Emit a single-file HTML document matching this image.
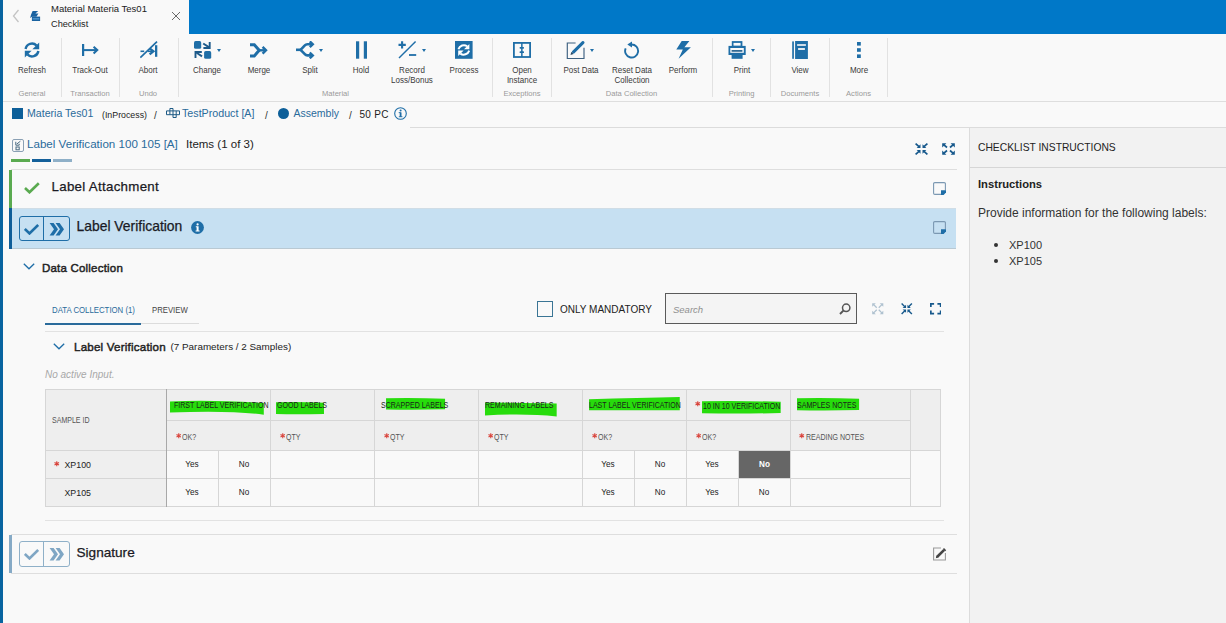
<!DOCTYPE html>
<html><head><meta charset="utf-8">
<style>
*{box-sizing:border-box;margin:0;padding:0}
html,body{width:1226px;height:623px;overflow:hidden}
body{background:#f9f9f9;font-family:"Liberation Sans",sans-serif;color:#222;position:relative}
.a{position:absolute}
.nw{white-space:nowrap}
.ic{position:absolute;fill:#1f6ea7;stroke:none}
.tl{position:absolute;font-size:8.6px;color:#3a3a3a;text-align:center;line-height:10px;white-space:nowrap;transform:scaleX(0.93);transform-origin:50% 0}
.gl{position:absolute;font-size:7.6px;color:#9a9a9a;text-align:center;white-space:nowrap;top:89px;line-height:9px}
.sep{position:absolute;top:38px;height:59px;width:1px;background:#e2e2e2}
.caret{position:absolute;width:0;height:0;border-left:2.5px solid transparent;border-right:2.5px solid transparent;border-top:3px solid #1f6ea7}
</style></head><body>
<!-- left bar -->
<div class="a" style="left:0;top:0;width:3px;height:623px;background:#0864a0"></div>
<!-- top blue bar -->
<div class="a" style="left:189px;top:0;width:1037px;height:34px;background:#0078c8"></div>

<!-- tab header -->
<svg class="a" style="left:12px;top:9px" width="8" height="14" viewBox="0 0 8 14"><path d="M6.5 1 L1.5 7 L6.5 13" fill="none" stroke="#c4c4c4" stroke-width="1.3"/></svg>
<svg class="a" style="left:30px;top:10.8px" width="11" height="11" viewBox="0 0 11 11"><path d="M2.6 0 H8.2 L5.4 2.6 H8.4 L6.4 5.8 H2 L0.1 7 L1 3.8 Z" fill="#1a62a0"/><rect x="1.9" y="5.6" width="8.2" height="4.4" fill="#1a62a0"/><rect x="2.6" y="7" width="6.8" height="1.6" fill="#4a90c8"/></svg>
<div class="a nw" style="left:51px;top:2px;font-size:9.5px;color:#222;line-height:13px">Material Materia Tes01</div>
<div class="a nw" style="left:51px;top:17.5px;font-size:9.2px;color:#222;line-height:13px">Checklist</div>
<svg class="a" style="left:171px;top:11px" width="10" height="10" viewBox="0 0 10 10"><path d="M1 1 L9 9 M9 1 L1 9" stroke="#6a6a6a" stroke-width="1"/></svg>

<!-- toolbar -->
<div class="a" style="left:3px;top:101px;width:1223px;height:1px;background:#dedede"></div>
<div class="sep" style="left:61px"></div>
<div class="sep" style="left:119px"></div>
<div class="sep" style="left:178px"></div>
<div class="sep" style="left:492px"></div>
<div class="sep" style="left:551px"></div>
<div class="sep" style="left:712px"></div>
<div class="sep" style="left:770px"></div>
<div class="sep" style="left:829px"></div>
<div class="sep" style="left:887px"></div>

<!-- toolbar icons -->
<svg class="ic" style="left:24px;top:42px" width="16" height="16" viewBox="0 0 16 16"><path d="M1.6 7 A6.4 6.4 0 0 1 12.6 3.6" fill="none" stroke="#1f6ea7" stroke-width="2.4"/><path d="M15.2 0.4 V7.2 H8.4 Z"/><path d="M14.4 9 A6.4 6.4 0 0 1 3.4 12.4" fill="none" stroke="#1f6ea7" stroke-width="2.4"/><path d="M0.8 15.6 V8.8 H7.6 Z"/></svg>
<div class="tl" style="top:65.3px;left:2px;width:60px;">Refresh</div>
<div class="gl" style="left:2px;width:60px">General</div>

<svg class="ic" style="left:82px;top:44px" width="17" height="12" viewBox="0 0 17 12"><rect x="0" y="0" width="2.2" height="12"/><path d="M2 6.1 H14.6" stroke="#1f6ea7" stroke-width="2" fill="none"/><path d="M11.6 2.8 L15.2 6.1 L11.6 9.4" stroke="#1f6ea7" stroke-width="2.1" fill="none"/></svg>
<div class="tl" style="top:65.3px;left:60px;width:60px;">Track-Out</div>
<div class="gl" style="left:60px;width:60px">Transaction</div>

<svg class="ic" style="left:140px;top:41px" width="18" height="18" viewBox="0 0 18 18"><path d="M0.3 16.6 L17 0.6" stroke="#1f6ea7" stroke-width="1.7" fill="none"/><rect x="15" y="4.2" width="2.3" height="11.6"/><path d="M0.5 10.3 H4.2" stroke="#1f6ea7" stroke-width="1.6"/><path d="M9.6 7.4 L13.4 10.3 L9.6 13.3" stroke="#1f6ea7" stroke-width="2.3" fill="none"/><path d="M8 10.3 H13" stroke="#1f6ea7" stroke-width="1.6"/></svg>
<div class="tl" style="top:65.3px;left:118px;width:60px;">Abort</div>
<div class="gl" style="left:118px;width:60px">Undo</div>

<svg class="ic" style="left:194px;top:41px" width="18" height="18" viewBox="0 0 18 18"><rect x="0" y="0.1" width="7.2" height="7.7" rx="1.6"/><rect x="10.1" y="10.1" width="7.1" height="7.7" rx="1.6"/><g stroke="#1d5a8a" stroke-width="1.9" fill="none"><path d="M9.4 7 H15.7 V1.1"/><path d="M9.2 2.5 L15.2 6.4"/><path d="M7.8 11 H1.5 V17"/><path d="M1.9 11.3 L8 15.4"/></g></svg>
<div class="caret" style="left:217px;top:49px"></div>
<div class="tl" style="top:65.3px;left:177px;width:60px;">Change</div>

<svg class="ic" style="left:249.5px;top:42.5px" width="18" height="15" viewBox="0 0 18 15"><path d="M0 1.7 H4.3 L9.2 7.3 L4.3 12.9 H0" stroke="#1f6ea7" stroke-width="3" fill="none"/><path d="M8.5 7.3 H15.5" stroke="#1f6ea7" stroke-width="2.4"/><path d="M12.6 3.9 L16 7.3 L12.6 10.7" stroke="#1f6ea7" stroke-width="2.4" fill="none"/></svg>
<div class="tl" style="top:65.3px;left:228.5px;width:60px;">Merge</div>

<svg class="ic" style="left:296px;top:41px" width="19" height="18" viewBox="0 0 19 18"><path d="M0 8.8 H5.5" stroke="#1f6ea7" stroke-width="2.6"/><path d="M4.6 8.8 L8.8 4.4 Q9.8 3.3 11.4 3.3 H16.5 M4.6 8.8 L8.8 13.2 Q9.8 14.4 11.4 14.4 H16.5" stroke="#1f6ea7" stroke-width="2.6" fill="none"/><path d="M13.8 0.4 L16.8 3.3 L13.8 6.2 M13.8 11.5 L16.8 14.4 L13.8 17.3" stroke="#1f6ea7" stroke-width="2.4" fill="none"/></svg>
<div class="caret" style="left:319px;top:49px"></div>
<div class="tl" style="top:65.3px;left:279.5px;width:60px;">Split</div>

<svg class="ic" style="left:355.5px;top:41px" width="11" height="18" viewBox="0 0 11 18"><rect x="0" y="0.3" width="3.2" height="17.4"/><rect x="7.8" y="0.3" width="3.2" height="17.4"/></svg>
<div class="tl" style="top:65.3px;left:331px;width:60px;">Hold</div>

<svg class="ic" style="left:398px;top:41px" width="19" height="18" viewBox="0 0 19 18"><path d="M0.5 3.9 H7.8 M4.1 0.2 V7.6" stroke="#1f6ea7" stroke-width="2.1"/><path d="M1 17 L17.6 0.6" stroke="#1f6ea7" stroke-width="1.45"/><path d="M11 14 H18.2" stroke="#1f6ea7" stroke-width="1.8"/></svg>
<div class="caret" style="left:422px;top:49px"></div>
<div class="tl" style="top:65.3px;left:382px;width:60px;">Record<br>Loss/Bonus</div>

<svg class="ic" style="left:454.5px;top:41px" width="18" height="18" viewBox="0 0 18 18"><rect x="0" y="0" width="17.6" height="17.8"/><path d="M3.4 8.2 A5.8 5.8 0 0 1 12.2 5.2" fill="none" stroke="#fff" stroke-width="2"/><path d="M14.4 3 V8.3 H9 Z" fill="#fff"/><path d="M14.2 9.6 A5.8 5.8 0 0 1 5.4 12.6" fill="none" stroke="#fff" stroke-width="2"/><path d="M3.2 14.9 V9.5 H8.6 Z" fill="#fff"/></svg>
<div class="tl" style="top:65.3px;left:433.5px;width:60px;">Process</div>
<div class="gl" style="left:305.5px;width:60px">Material</div>

<svg class="ic" style="left:513px;top:42px" width="18" height="16" viewBox="0 0 18 16"><rect x="0.9" y="0.9" width="16.2" height="14.1" fill="none" stroke="#1f6ea7" stroke-width="1.8"/><rect x="8.1" y="1" width="1.5" height="14"/><rect x="6.6" y="5" width="4.4" height="1.7" rx="0.6"/><rect x="6.6" y="9.3" width="4.4" height="1.7" rx="0.6"/></svg>
<div class="tl" style="top:65.3px;left:492px;width:60px;">Open<br>Instance</div>
<div class="gl" style="left:492px;width:60px">Exceptions</div>

<svg class="ic" style="left:566px;top:41px" width="19" height="18" viewBox="0 0 19 18"><path d="M9.6 2 H1.3 V17.6 H18 V6.8" stroke="#3d6080" stroke-width="1.15" fill="none"/><path d="M7.6 10.8 L16.9 1.6" stroke="#1f6ea7" stroke-width="3.1" stroke-linecap="round"/><path d="M4.5 13.9 L5.4 10.8 L7.6 13 Z" fill="#2a4a66"/></svg>
<div class="caret" style="left:590px;top:49px"></div>
<div class="tl" style="top:65.3px;left:550.5px;width:60px;">Post Data</div>

<svg class="ic" style="left:624px;top:41px" width="16" height="18" viewBox="0 0 16 18"><path d="M1.7 7.3 A6.5 6.5 0 1 0 7.5 3.5" fill="none" stroke="#1f6ea7" stroke-width="1.9"/><path d="M3.3 3.5 L8 0.4 V6.6 Z"/></svg>
<div class="tl" style="top:65.3px;left:601.5px;width:60px;">Reset Data<br>Collection</div>
<div class="gl" style="left:561.5px;width:140px">Data Collection</div>

<svg class="ic" style="left:675.5px;top:41px" width="16" height="18" viewBox="0 0 16 18"><path d="M5.7 0.1 H13.4 L8.4 6.2 H14.9 L2.6 17.8 L6.8 8.6 H0.3 Z"/></svg>
<div class="tl" style="top:65.3px;left:653px;width:60px;">Perform</div>

<svg class="ic" style="left:727.5px;top:41px" width="19" height="18" viewBox="0 0 19 18"><rect x="3.8" y="0.1" width="10.6" height="4.9"/><rect x="5.5" y="1.9" width="7.1" height="2.8" fill="#f9f9f9"/><rect x="0.5" y="4.9" width="17.2" height="9.1"/><rect x="2.3" y="7" width="13.5" height="4.8" fill="#f9f9f9"/><rect x="3.6" y="9.1" width="10.8" height="1.6" fill="#1a5a8a"/><rect x="3.6" y="12.4" width="11" height="5.4"/></svg>
<div class="caret" style="left:750.5px;top:49px"></div>
<div class="tl" style="top:65.3px;left:711.5px;width:60px;">Print</div>
<div class="gl" style="left:711.5px;width:60px">Printing</div>

<svg class="ic" style="left:792px;top:41px" width="16" height="18" viewBox="0 0 16 18"><rect x="0.2" y="0.4" width="1.7" height="17.4"/><rect x="3.1" y="0" width="12.8" height="18"/><rect x="5.1" y="3.2" width="8.8" height="1.6" fill="#f9f9f9"/><rect x="6.1" y="7.1" width="6.8" height="1.8" fill="#f9f9f9"/></svg>
<div class="tl" style="top:65.3px;left:770px;width:60px;">View</div>
<div class="gl" style="left:770px;width:60px">Documents</div>

<svg class="ic" style="left:856.5px;top:42px" width="4" height="16" viewBox="0 0 4 16"><rect x="0" y="0" width="3.8" height="3.6"/><rect x="0" y="6.2" width="3.8" height="3.6"/><rect x="0" y="12.4" width="3.8" height="3.6"/></svg>
<div class="tl" style="top:65.3px;left:828.5px;width:60px;">More</div>
<div class="gl" style="left:828.5px;width:60px">Actions</div>


<!-- breadcrumb -->
<div class="a" style="left:12px;top:108px;width:11px;height:11px;background:#0d5f99"></div>
<div class="a nw" style="left:27px;top:106px;font-size:10.6px;color:#2a6b9b;line-height:14px">Materia Tes01</div>
<div class="a nw" style="left:102px;top:108.8px;font-size:8.8px;color:#222;line-height:13px">(InProcess)</div>
<div class="a nw" style="left:154px;top:109px;font-size:10px;color:#333;line-height:13px">/</div>
<svg class="a" style="left:165.5px;top:108px" width="14" height="10" viewBox="0 0 14 10"><path d="M0.5 2.9 H13.5 V6.7 H0.5 Z M3.9 2.9 V6.7 M7 2.9 V6.7 M10.2 2.9 V6.7 M3.9 2.9 V0.5 H7 V2.9 M7 6.7 V9.5 H10.2 V6.7" fill="none" stroke="#1d5a85" stroke-width="1"/></svg>
<div class="a nw" style="left:182px;top:106px;font-size:10.7px;color:#2a6b9b;line-height:14px">TestProduct [A]</div>
<div class="a nw" style="left:265px;top:109px;font-size:10px;color:#333;line-height:13px">/</div>
<div class="a" style="left:278px;top:107.5px;width:11px;height:11px;border-radius:50%;background:#0d5f99"></div>
<div class="a nw" style="left:293.5px;top:106px;font-size:10.5px;color:#2a6b9b;line-height:14px">Assembly</div>
<div class="a nw" style="left:349px;top:109px;font-size:10px;color:#333;line-height:13px">/</div>
<div class="a nw" style="left:359.5px;top:107.5px;font-size:10px;color:#222;line-height:14px;letter-spacing:0.3px">50 PC</div>
<svg class="a" style="left:394px;top:106.5px" width="13" height="13" viewBox="0 0 13 13"><circle cx="6.5" cy="6.5" r="5.8" fill="none" stroke="#1f6ea7" stroke-width="1.1"/><rect x="5.7" y="5.4" width="1.8" height="4.5" fill="#1f6ea7"/><circle cx="6.6" cy="3.6" r="1" fill="#1f6ea7"/><rect x="4.7" y="5.2" width="2" height="0.9" fill="#1f6ea7"/><rect x="4.8" y="9.3" width="3.6" height="0.9" fill="#1f6ea7"/></svg>

<div class="a" style="left:410px;top:127px;width:816px;height:1px;background:#dcdcdc"></div>

<!-- right panel -->
<div class="a" style="left:969px;top:128px;width:257px;height:495px;background:#f2f2f2;border-left:1px solid #dcdcdc"></div>
<div class="a" style="left:970px;top:167px;width:256px;height:1px;background:#d6d6d6"></div>
<div class="a nw" style="left:978px;top:141px;font-size:10.3px;color:#222;line-height:13px">CHECKLIST INSTRUCTIONS</div>
<div class="a nw" style="left:978px;top:177px;font-size:11.2px;font-weight:bold;color:#222;line-height:14px">Instructions</div>
<div class="a nw" style="left:978px;top:206px;font-size:12px;color:#333;line-height:15px">Provide information for the following labels:</div>
<div class="a" style="left:994px;top:243px;width:4px;height:4px;border-radius:50%;background:#333"></div>
<div class="a" style="left:994px;top:259px;width:4px;height:4px;border-radius:50%;background:#333"></div>
<div class="a nw" style="left:1009px;top:238px;font-size:11px;color:#333;line-height:14px">XP100</div>
<div class="a nw" style="left:1009px;top:254px;font-size:11px;color:#333;line-height:14px">XP105</div>

<!-- items header -->
<svg class="a" style="left:12px;top:139.4px" width="12" height="13" viewBox="0 0 12 13"><rect x="0.5" y="0.5" width="11" height="12" rx="1.5" fill="none" stroke="#8aa0b4" stroke-width="1"/><path d="M3.8 2.8 V6.2 H7.2 V4.8" fill="none" stroke="#4a6a82" stroke-width="1"/><path d="M4.8 5 L8.4 2.2" stroke="#4a6a82" stroke-width="1"/><rect x="4" y="8" width="3.2" height="2.8" fill="none" stroke="#4a6a82" stroke-width="1"/></svg>
<div class="a nw" style="left:27px;top:137px;font-size:11.6px;color:#2a6b9b;line-height:14px">Label Verification 100 105 [A]</div>
<div class="a nw" style="left:186px;top:137px;font-size:11.5px;color:#222;line-height:14px">Items (1 of 3)</div>
<div class="a" style="left:11px;top:159px;width:19px;height:3px;background:#5aaa50"></div>
<div class="a" style="left:32px;top:159px;width:19px;height:3px;background:#14609a"></div>
<div class="a" style="left:53px;top:159px;width:19px;height:3px;background:#8fb0c8"></div>

<svg class="a" style="left:915px;top:143px" width="13" height="12" viewBox="0 0 13 12"><path d="M0.60 0.60 L4.30 3.80" stroke="#17598c" stroke-width="1.7"/><path d="M5.50 1.20 V5.00 H1.70 Z" fill="#17598c"/><path d="M0.60 11.40 L4.30 8.20" stroke="#17598c" stroke-width="1.7"/><path d="M5.50 10.80 V7.00 H1.70 Z" fill="#17598c"/><path d="M12.40 0.60 L8.70 3.80" stroke="#17598c" stroke-width="1.7"/><path d="M7.50 1.20 V5.00 H11.30 Z" fill="#17598c"/><path d="M12.40 11.40 L8.70 8.20" stroke="#17598c" stroke-width="1.7"/><path d="M7.50 10.80 V7.00 H11.30 Z" fill="#17598c"/></svg>
<svg class="a" style="left:942px;top:143px" width="13" height="12" viewBox="0 0 13 12"><path d="M0.20 0.20 H4.40 L0.20 4.40 Z" fill="#17598c"/><path d="M1.40 1.40 L5.00 4.50" stroke="#17598c" stroke-width="1.7"/><path d="M0.20 11.80 H4.40 L0.20 7.60 Z" fill="#17598c"/><path d="M1.40 10.60 L5.00 7.50" stroke="#17598c" stroke-width="1.7"/><path d="M12.80 0.20 H8.60 L12.80 4.40 Z" fill="#17598c"/><path d="M11.60 1.40 L8.00 4.50" stroke="#17598c" stroke-width="1.7"/><path d="M12.80 11.80 H8.60 L12.80 7.60 Z" fill="#17598c"/><path d="M11.60 10.60 L8.00 7.50" stroke="#17598c" stroke-width="1.7"/></svg>

<div class="a" style="left:11px;top:169px;width:946px;height:1px;background:#dedede"></div>

<!-- Label Attachment -->
<div class="a" style="left:9px;top:170px;width:3px;height:38px;background:#5aaa50"></div>
<svg class="a" style="left:24px;top:182px" width="16" height="12" viewBox="0 0 16 12"><path d="M1 6 L5.5 10.3 L14.8 1.2" fill="none" stroke="#5aaa50" stroke-width="2.6"/></svg>
<div class="a nw" style="left:51.5px;top:178.7px;font-size:13.3px;letter-spacing:0.3px;color:#1a1a24;line-height:16px;-webkit-text-stroke:0.25px #1a1a24">Label Attachment</div>
<svg class="a" style="left:933px;top:182.2px" width="14" height="14" viewBox="0 0 14 14"><path d="M12.4 8.5 V1.8 Q12.4 0.6 11.2 0.6 H1.8 Q0.6 0.6 0.6 1.8 V11.2 Q0.6 12.4 1.8 12.4 H8.5" fill="none" stroke="#7b98b2" stroke-width="1.1"/><path d="M8 8.2 H13 V10.6 L10.6 13 H8 Z" fill="#1f6ea7"/></svg>

<!-- Label Verification active -->
<div class="a" style="left:9px;top:208px;width:947px;height:40px;background:#c6e0f2"></div>
<div class="a" style="left:9px;top:208px;width:947px;height:1px;background:#d0dde6"></div>
<div class="a" style="left:9px;top:248px;width:947px;height:1px;background:#b9c9d3"></div>
<div class="a" style="left:9px;top:208px;width:3px;height:41px;background:#0f5e99"></div>
<div class="a" style="left:19px;top:216px;width:51px;height:25px;border:1.2px solid #1f6ea7;border-radius:3px"></div>
<div class="a" style="left:43px;top:216px;width:1.2px;height:25px;background:#1f6ea7"></div>
<svg class="a" style="left:24px;top:224px" width="15" height="11" viewBox="0 0 15 11"><path d="M0.8 5 L5.5 9.4 L14.2 1" fill="none" stroke="#1f6ea7" stroke-width="2.7"/></svg>
<svg class="a" style="left:49px;top:223px" width="16" height="13" viewBox="0 0 16 13"><path d="M0.6 0 H4.6 L9 6.3 L4.6 12.6 H0.6 L5 6.3 Z M6.6 0 H10.6 L15 6.3 L10.6 12.6 H6.6 L11 6.3 Z" fill="#1f6ea7"/></svg>
<div class="a nw" style="left:76.5px;top:217.5px;font-size:13.9px;color:#1a1a24;line-height:16px;-webkit-text-stroke:0.25px #1a1a24">Label Verification</div>
<svg class="a" style="left:191px;top:220.5px" width="13" height="13" viewBox="0 0 13 13"><circle cx="6.5" cy="6.5" r="6.4" fill="#1f6ea7"/><circle cx="6.6" cy="3.4" r="1.1" fill="#fff"/><path d="M4.8 5.2 H7.6 V9.6 H8.6 V10.6 H4.6 V9.6 H5.6 V6.2 H4.8 Z" fill="#fff"/></svg>
<svg class="a" style="left:933px;top:221.4px" width="14" height="14" viewBox="0 0 14 14"><path d="M12.4 8.5 V1.8 Q12.4 0.6 11.2 0.6 H1.8 Q0.6 0.6 0.6 1.8 V11.2 Q0.6 12.4 1.8 12.4 H8.5" fill="none" stroke="#7b98b2" stroke-width="1.1"/><path d="M8 8.2 H13 V10.6 L10.6 13 H8 Z" fill="#1f6ea7"/></svg>

<!-- Data Collection -->
<svg class="a" style="left:23px;top:263px" width="12" height="7" viewBox="0 0 12 7"><path d="M0.8 0.8 L6 5.8 L11.2 0.8" fill="none" stroke="#1f6ea7" stroke-width="1.3"/></svg>
<div class="a nw" style="left:42px;top:262px;font-size:11.5px;letter-spacing:0.2px;-webkit-text-stroke:0.45px #222;color:#222;line-height:13px">Data Collection</div>

<!-- tabs -->
<div class="a nw" style="left:51.7px;top:305px;font-size:9px;color:#2a6b9b;line-height:11px;transform:scaleX(0.867);transform-origin:0 0">DATA COLLECTION (1)</div>
<div class="a nw" style="left:152.3px;top:305px;font-size:9px;color:#444;line-height:11px;transform:scaleX(0.86);transform-origin:0 0">PREVIEW</div>
<div class="a" style="left:45px;top:323px;width:154px;height:1px;background:#dcdcdc"></div>
<div class="a" style="left:45px;top:322.5px;width:96px;height:2px;background:#2a6b9b"></div>

<div class="a" style="left:537px;top:301px;width:16px;height:16px;border:1.5px solid #3a7595"></div>
<div class="a nw" style="left:560px;top:304px;font-size:10px;color:#222;line-height:12px">ONLY MANDATORY</div>
<div class="a" style="left:665px;top:293px;width:192px;height:31px;border:1px solid #5a5a5a;background:#f4f4f4"></div>
<div class="a nw" style="left:673px;top:303.8px;font-size:9.5px;font-style:italic;color:#909090;line-height:12px">Search</div>
<svg class="a" style="left:838.5px;top:303px" width="12" height="12" viewBox="0 0 12 12"><circle cx="7.2" cy="4.8" r="3.7" fill="none" stroke="#555" stroke-width="1.5"/><path d="M4.6 7.4 L1 11" stroke="#555" stroke-width="1.9"/></svg>
<svg class="a" style="left:872px;top:303px" width="11.5" height="11.5" viewBox="0 0 11.5 11.5"><path d="M0.2 0.2 H3.8 L0.2 3.8 Z" fill="#b0c2d0"/><path d="M1.4 1.4 L4.75 4.75" stroke="#b0c2d0" stroke-width="1.3"/><path d="M11.3 0.2 H7.7 L11.3 3.8 Z" fill="#b0c2d0"/><path d="M10.1 1.4 L6.75 4.75" stroke="#b0c2d0" stroke-width="1.3"/><path d="M0.2 11.3 H3.8 L0.2 7.7 Z" fill="#b0c2d0"/><path d="M1.4 10.1 L4.75 6.75" stroke="#b0c2d0" stroke-width="1.3"/><path d="M11.3 11.3 H7.7 L11.3 7.7 Z" fill="#b0c2d0"/><path d="M10.1 10.1 L6.75 6.75" stroke="#b0c2d0" stroke-width="1.3"/></svg>
<svg class="a" style="left:901px;top:303px" width="11.5" height="11.5" viewBox="0 0 11.5 11.5"><path d="M0.6 0.6 L3.85 3.85" stroke="#17598c" stroke-width="1.4"/><path d="M5.05 1.65 V5.05 H1.65 Z" fill="#17598c"/><path d="M10.90 0.6 L7.65 3.85" stroke="#17598c" stroke-width="1.4"/><path d="M6.45 1.65 V5.05 H9.85 Z" fill="#17598c"/><path d="M0.6 10.90 L3.85 7.65" stroke="#17598c" stroke-width="1.4"/><path d="M5.05 9.85 V6.45 H1.65 Z" fill="#17598c"/><path d="M10.90 10.90 L7.65 7.65" stroke="#17598c" stroke-width="1.4"/><path d="M6.45 9.85 V6.45 H9.85 Z" fill="#17598c"/></svg>
<svg class="a" style="left:929.6px;top:303.2px" width="11.5" height="11.5" viewBox="0 0 11.5 11.5" fill="none" stroke="#17598c" stroke-width="1.7"><path d="M0.85 4.1 V0.85 H4.1 M7.4 0.85 H10.65 V4.1 M10.65 7.4 V10.65 H7.4 M4.1 10.65 H0.85 V7.4"/></svg>
<div class="a" style="left:45px;top:331px;width:899px;height:1px;background:#e2e2e2"></div>

<!-- sub section -->
<svg class="a" style="left:53px;top:343px" width="12" height="7" viewBox="0 0 12 7"><path d="M0.8 0.8 L6 5.8 L11.2 0.8" fill="none" stroke="#1f6ea7" stroke-width="1.3"/></svg>
<div class="a nw" style="left:74px;top:340px;font-size:11.6px;letter-spacing:0.2px;-webkit-text-stroke:0.45px #222;color:#222;line-height:13px">Label Verification</div>
<div class="a nw" style="left:170.5px;top:340.2px;font-size:9.9px;color:#222;line-height:13px">(7 Parameters / 2 Samples)</div>
<div class="a nw" style="left:45px;top:369px;font-size:10px;font-style:italic;color:#a8a8a8;line-height:12px">No active Input.</div>

<!--T-->
<div class="a" style="left:45px;top:389px;width:895px;height:61px;background:#eeeeee"></div>
<div class="a" style="left:45px;top:450px;width:121px;height:56px;background:#efefef"></div>
<div class="a" style="left:166px;top:450px;width:774px;height:56px;background:#f9f9f9"></div>
<div class="a" style="left:739px;top:451px;width:51px;height:27px;background:#666666"></div>
<div class="a" style="left:45px;top:389px;width:896px;height:1px;background:#d6d6d6"></div>
<div class="a" style="left:166px;top:420px;width:744px;height:1px;background:#d6d6d6"></div>
<div class="a" style="left:45px;top:450px;width:896px;height:1px;background:#d6d6d6"></div>
<div class="a" style="left:45px;top:478px;width:865px;height:1px;background:#d6d6d6"></div>
<div class="a" style="left:45px;top:506px;width:896px;height:1px;background:#d6d6d6"></div>
<div class="a" style="left:45px;top:389px;width:1px;height:118px;background:#d6d6d6"></div>
<div class="a" style="left:940px;top:389px;width:1px;height:118px;background:#d6d6d6"></div>
<div class="a" style="left:166px;top:389px;width:1px;height:118px;background:#a8a8a8"></div>
<div class="a" style="left:270px;top:389px;width:1px;height:118px;background:#d6d6d6"></div>
<div class="a" style="left:374px;top:389px;width:1px;height:118px;background:#d6d6d6"></div>
<div class="a" style="left:478px;top:389px;width:1px;height:118px;background:#d6d6d6"></div>
<div class="a" style="left:582px;top:389px;width:1px;height:118px;background:#d6d6d6"></div>
<div class="a" style="left:686px;top:389px;width:1px;height:118px;background:#d6d6d6"></div>
<div class="a" style="left:790px;top:389px;width:1px;height:118px;background:#d6d6d6"></div>
<div class="a" style="left:910px;top:389px;width:1px;height:118px;background:#d6d6d6"></div>
<div class="a" style="left:218px;top:450px;width:1px;height:57px;background:#d6d6d6"></div>
<div class="a" style="left:634px;top:450px;width:1px;height:57px;background:#d6d6d6"></div>
<div class="a" style="left:738px;top:450px;width:1px;height:57px;background:#d6d6d6"></div>
<svg class="a" style="left:169.8px;top:400px" width="94.80000000000001" height="15.800000000000011" viewBox="0 0 94.80000000000001 15.800000000000011"><path d="M0 1.5 Q40 -0.5 93.8 3 L93.8 14.8 Q60 10 0 12.5 Z" fill="#27dc0c"/></svg>
<svg class="a" style="left:276px;top:401.6px" width="49" height="13.399999999999977" viewBox="0 0 49 13.399999999999977"><path d="M0 0.3 Q24.0 -0.3 48 0.8 L48 11.899999999999977 Q24.0 12.699999999999978 0 12.099999999999977 Z" fill="#27dc0c"/></svg>
<svg class="a" style="left:386px;top:398px" width="60.10000000000002" height="12.699999999999989" viewBox="0 0 60.10000000000002 12.699999999999989"><path d="M0 0.3 Q29.55000000000001 -0.3 59.10000000000002 0.8 L59.10000000000002 11.199999999999989 Q29.55000000000001 11.99999999999999 0 11.399999999999988 Z" fill="#27dc0c"/></svg>
<svg class="a" style="left:485.3px;top:401.6px" width="72.69999999999999" height="15.399999999999977" viewBox="0 0 72.69999999999999 15.399999999999977"><path d="M0 0.5 L71.7 1.5 L71.7 14.4 Q40 11 0 13.4 Z" fill="#27dc0c"/></svg>
<svg class="a" style="left:588.5px;top:396.5px" width="91.79999999999995" height="14.199999999999989" viewBox="0 0 91.79999999999995 14.199999999999989"><path d="M0 2.2 Q50 1 90.8 0 L90.8 13.2 L0 13.2 Z" fill="#27dc0c"/></svg>
<svg class="a" style="left:702px;top:401px" width="79.70000000000005" height="13.600000000000023" viewBox="0 0 79.70000000000005 13.600000000000023"><path d="M0 0.3 Q39.35000000000002 -0.3 78.70000000000005 0.8 L78.70000000000005 12.100000000000023 Q39.35000000000002 12.900000000000023 0 12.300000000000022 Z" fill="#27dc0c"/></svg>
<svg class="a" style="left:797px;top:398.1px" width="63.10000000000002" height="13.5" viewBox="0 0 63.10000000000002 13.5"><path d="M0 0.3 Q31.05000000000001 -0.3 62.10000000000002 0.8 L62.10000000000002 12.0 Q31.05000000000001 12.8 0 12.2 Z" fill="#27dc0c"/></svg>
<div class="a nw" style="left:51.8px;top:415px;font-size:8.8px;color:#555;line-height:10px;transform:scaleX(0.80);transform-origin:0 0;">SAMPLE ID</div>
<div class="a nw" style="left:173.7px;top:400px;font-size:8.8px;color:#1a261a;line-height:10px;transform:scaleX(0.80);transform-origin:0 0;">FIRST LABEL VERIFICATION</div>
<div class="a nw" style="left:277px;top:400px;font-size:8.8px;color:#1a261a;line-height:10px;transform:scaleX(0.80);transform-origin:0 0;">GOOD LABELS</div>
<div class="a nw" style="left:381.2px;top:400px;font-size:8.8px;color:#1a261a;line-height:10px;transform:scaleX(0.80);transform-origin:0 0;">SCRAPPED LABELS</div>
<div class="a nw" style="left:485.3px;top:400px;font-size:8.8px;color:#1a261a;line-height:10px;transform:scaleX(0.80);transform-origin:0 0;">REMAINING LABELS</div>
<div class="a nw" style="left:589.2px;top:400px;font-size:8.8px;color:#1a261a;line-height:10px;transform:scaleX(0.80);transform-origin:0 0;">LAST LABEL VERIFICATION</div>
<svg class="a" style="left:695px;top:401px" width="5.5" height="5.5" viewBox="0 0 10 10"><path d="M5 0.3 V9.7 M0.9 2.6 L9.1 7.4 M0.9 7.4 L9.1 2.6" stroke="#d9443c" stroke-width="2"/></svg>
<div class="a nw" style="left:702.8px;top:400.8px;font-size:8.8px;color:#1a261a;line-height:10px;transform:scaleX(0.80);transform-origin:0 0;">10 IN 10 VERIFICATION</div>
<div class="a nw" style="left:797.4px;top:400px;font-size:8.8px;color:#1a261a;line-height:10px;transform:scaleX(0.80);transform-origin:0 0;">SAMPLES NOTES</div>
<svg class="a" style="left:175.6px;top:433.3px" width="5.5" height="5.5" viewBox="0 0 10 10"><path d="M5 0.3 V9.7 M0.9 2.6 L9.1 7.4 M0.9 7.4 L9.1 2.6" stroke="#d9443c" stroke-width="2"/></svg>
<div class="a nw" style="left:182.4px;top:432px;font-size:8.8px;color:#555;line-height:10px;transform:scaleX(0.80);transform-origin:0 0;">OK?</div>
<svg class="a" style="left:279.6px;top:433.3px" width="5.5" height="5.5" viewBox="0 0 10 10"><path d="M5 0.3 V9.7 M0.9 2.6 L9.1 7.4 M0.9 7.4 L9.1 2.6" stroke="#d9443c" stroke-width="2"/></svg>
<div class="a nw" style="left:286.40000000000003px;top:432px;font-size:8.8px;color:#555;line-height:10px;transform:scaleX(0.80);transform-origin:0 0;">QTY</div>
<svg class="a" style="left:383.6px;top:433.3px" width="5.5" height="5.5" viewBox="0 0 10 10"><path d="M5 0.3 V9.7 M0.9 2.6 L9.1 7.4 M0.9 7.4 L9.1 2.6" stroke="#d9443c" stroke-width="2"/></svg>
<div class="a nw" style="left:390.40000000000003px;top:432px;font-size:8.8px;color:#555;line-height:10px;transform:scaleX(0.80);transform-origin:0 0;">QTY</div>
<svg class="a" style="left:487.6px;top:433.3px" width="5.5" height="5.5" viewBox="0 0 10 10"><path d="M5 0.3 V9.7 M0.9 2.6 L9.1 7.4 M0.9 7.4 L9.1 2.6" stroke="#d9443c" stroke-width="2"/></svg>
<div class="a nw" style="left:494.40000000000003px;top:432px;font-size:8.8px;color:#555;line-height:10px;transform:scaleX(0.80);transform-origin:0 0;">QTY</div>
<svg class="a" style="left:591.6px;top:433.3px" width="5.5" height="5.5" viewBox="0 0 10 10"><path d="M5 0.3 V9.7 M0.9 2.6 L9.1 7.4 M0.9 7.4 L9.1 2.6" stroke="#d9443c" stroke-width="2"/></svg>
<div class="a nw" style="left:598.4px;top:432px;font-size:8.8px;color:#555;line-height:10px;transform:scaleX(0.80);transform-origin:0 0;">OK?</div>
<svg class="a" style="left:695.6px;top:433.3px" width="5.5" height="5.5" viewBox="0 0 10 10"><path d="M5 0.3 V9.7 M0.9 2.6 L9.1 7.4 M0.9 7.4 L9.1 2.6" stroke="#d9443c" stroke-width="2"/></svg>
<div class="a nw" style="left:702.4px;top:432px;font-size:8.8px;color:#555;line-height:10px;transform:scaleX(0.80);transform-origin:0 0;">OK?</div>
<svg class="a" style="left:799.1px;top:433.3px" width="5.5" height="5.5" viewBox="0 0 10 10"><path d="M5 0.3 V9.7 M0.9 2.6 L9.1 7.4 M0.9 7.4 L9.1 2.6" stroke="#d9443c" stroke-width="2"/></svg>
<div class="a nw" style="left:805.9px;top:432px;font-size:8.8px;color:#555;line-height:10px;transform:scaleX(0.80);transform-origin:0 0;">READING NOTES</div>
<svg class="a" style="left:54px;top:461px" width="5.5" height="5.5" viewBox="0 0 10 10"><path d="M5 0.3 V9.7 M0.9 2.6 L9.1 7.4 M0.9 7.4 L9.1 2.6" stroke="#d9443c" stroke-width="2"/></svg>
<div class="a nw" style="left:64.5px;top:460.2px;font-size:8.8px;color:#222;line-height:10px;">XP100</div>
<div class="a nw" style="left:64.5px;top:488.2px;font-size:8.8px;color:#222;line-height:10px;">XP105</div>
<div class="a nw" style="left:166px;top:459.5px;width:52px;text-align:center;font-size:8.2px;color:#222;line-height:10px;">Yes</div>
<div class="a nw" style="left:218px;top:459.5px;width:52px;text-align:center;font-size:8.2px;color:#222;line-height:10px;">No</div>
<div class="a nw" style="left:582px;top:459.5px;width:52px;text-align:center;font-size:8.2px;color:#222;line-height:10px;">Yes</div>
<div class="a nw" style="left:634px;top:459.5px;width:52px;text-align:center;font-size:8.2px;color:#222;line-height:10px;">No</div>
<div class="a nw" style="left:686px;top:459.5px;width:52px;text-align:center;font-size:8.2px;color:#222;line-height:10px;">Yes</div>
<div class="a nw" style="left:166px;top:487.5px;width:52px;text-align:center;font-size:8.2px;color:#222;line-height:10px;">Yes</div>
<div class="a nw" style="left:218px;top:487.5px;width:52px;text-align:center;font-size:8.2px;color:#222;line-height:10px;">No</div>
<div class="a nw" style="left:582px;top:487.5px;width:52px;text-align:center;font-size:8.2px;color:#222;line-height:10px;">Yes</div>
<div class="a nw" style="left:634px;top:487.5px;width:52px;text-align:center;font-size:8.2px;color:#222;line-height:10px;">No</div>
<div class="a nw" style="left:686px;top:487.5px;width:52px;text-align:center;font-size:8.2px;color:#222;line-height:10px;">Yes</div>
<div class="a nw" style="left:739px;top:459.5px;width:51px;text-align:center;font-size:8.2px;color:#fff;line-height:10px;font-weight:bold">No</div>
<div class="a nw" style="left:738px;top:487.5px;width:52px;text-align:center;font-size:8.2px;color:#222;line-height:10px;">No</div>
<!--/T-->
<div class="a" style="left:45px;top:520px;width:899px;height:1px;background:#e2e2e2"></div>

<!-- Signature -->
<div class="a" style="left:11px;top:534px;width:946px;height:1px;background:#dedede"></div>
<div class="a" style="left:11px;top:573px;width:946px;height:1px;background:#dedede"></div>
<div class="a" style="left:9px;top:535px;width:3px;height:38px;background:#86aac6"></div>
<div class="a" style="left:19px;top:541px;width:51px;height:26px;border:1px solid #8fb0c8;border-radius:3px"></div>
<div class="a" style="left:43px;top:541px;width:1px;height:26px;background:#8fb0c8"></div>
<svg class="a" style="left:24px;top:549px" width="15" height="11" viewBox="0 0 15 11"><path d="M0.8 5 L5.5 9.4 L14.2 1" fill="none" stroke="#7fa6c4" stroke-width="2.7"/></svg>
<svg class="a" style="left:49px;top:548px" width="16" height="13" viewBox="0 0 16 13"><path d="M0.6 0 H4.6 L9 6.3 L4.6 12.6 H0.6 L5 6.3 Z M6.6 0 H10.6 L15 6.3 L10.6 12.6 H6.6 L11 6.3 Z" fill="#7fa6c4"/></svg>
<div class="a nw" style="left:76.5px;top:545px;font-size:13.6px;color:#1a1a24;line-height:16px;-webkit-text-stroke:0.25px #1a1a24">Signature</div>
<svg class="a" style="left:933px;top:546.5px" width="14" height="14" viewBox="0 0 14 14"><path d="M8 1 H0.6 V13 H12.4 V6" fill="none" stroke="#9a9a9a" stroke-width="1.1"/><path d="M4 10 L11.2 2.8" stroke="#444" stroke-width="2.6"/><path d="M11 1 L13.2 3.2 L12.2 4.2 L10 2 Z" fill="#444"/><path d="M2.8 11.2 L3.4 8.8 L5.2 10.6 Z" fill="#444"/></svg>

</body></html>
